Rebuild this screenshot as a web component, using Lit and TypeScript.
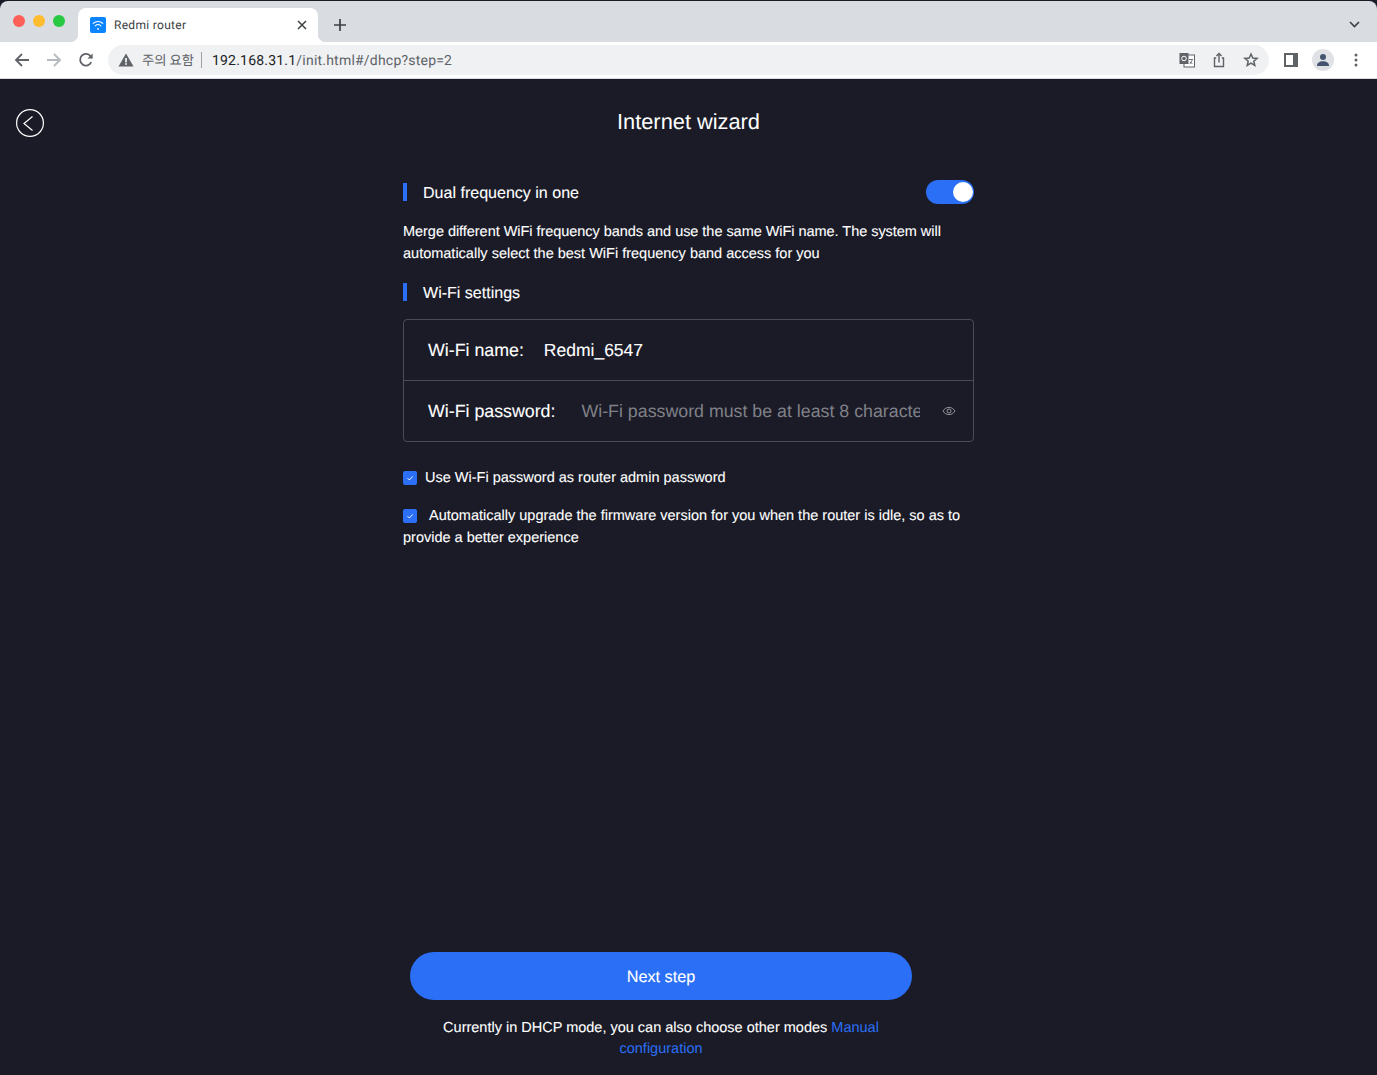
import { LitElement, html, css } from "lit";
import { customElement } from "lit/decorators.js";

@customElement("app-root")
export class AppRoot extends LitElement {
  static styles = css`
    :host { display: flex; flex-direction: column; width: 1377px; height: 1075px; overflow: hidden; font-family: "Liberation Sans", Arial, sans-serif; background: #1a1b27; text-rendering: geometricPrecision; }
    svg { display: block; }
    .tabstrip { height: 41px; margin-top: 1px; background: #d9dce1; display: flex; align-items: flex-end; position: relative; border-radius: 8px 8px 0 0; flex: none; }
    .lights { display: flex; gap: 8px; padding: 0 0 0 13px; align-self: flex-start; margin-top: 14px; width: 78px; box-sizing: border-box; flex: none; }
    .lights i { width: 12px; height: 12px; border-radius: 50%; display: block; }
    .tab { width: 240px; height: 34px; background: #fff; border-radius: 8px 8px 0 0; display: flex; align-items: center; box-sizing: border-box; padding: 0 11px 0 12px; font: 12px Roboto, sans-serif; color: #3c4043; position: relative; flex: none; }
    .tab::before, .tab::after { content: ""; position: absolute; bottom: 0; width: 8px; height: 8px; }
    .tab::before { left: -8px; background: radial-gradient(circle at 0 0, transparent 8px, #fff 8.5px); }
    .tab::after { right: -8px; background: radial-gradient(circle at 100% 0, transparent 8px, #fff 8.5px); }
    .fav { width: 16px; height: 16px; border-radius: 2px; background: #0a84ff; margin-right: 8px; flex: none; }
    .title { flex: 1; letter-spacing: 0.3px; }
    .plus { margin: 0 0 11px 16px; }
    .chev { position: absolute; right: 17px; top: 20px; }
    .toolbar { height: 36px; background: #fff; display: flex; align-items: center; flex: none; position: relative; }
    .nav { width: 32px; display: flex; justify-content: center; flex: none; }
    .navs { display: flex; padding-left: 6px; gap: 0; width: 108px; box-sizing: border-box; }
    .omni { width: 1161px; height: 30px; background: #eff1f3; border-radius: 15px; display: flex; align-items: center; box-sizing: border-box; padding-left: 10px; flex: none; font: 14px Roboto, sans-serif; }
    .warn-text { font: 13.3px "Noto Sans CJK KR", sans-serif; color: #5f6368; margin-left: 8px; position: relative; top: -1px; }
    .sep { width: 1px; height: 16px; background: #9aa0a6; margin: 0 10px 0 7px; }
    .url { padding-top: 1px; letter-spacing: 0.21px; }
    .host { color: #202124; }
    .path { color: #5f6368; }
    .spacer { flex: 1; }
    .omni-icons { display: flex; gap: 16px; padding-right: 10px; align-items: center; }
    .rhs { display: flex; align-items: center; margin-left: 15px; }
    .avatar { width: 22px; height: 22px; border-radius: 50%; background: #dfe1e5; margin-left: 14px; display: flex; align-items: center; justify-content: center; }
    .dots { margin-left: 20px; }
    .divider { height: 1px; background: #d9dce1; flex: none; }
    .page { flex: 1; position: relative; display: flex; flex-direction: column; color: #fff; min-height: 0; }
    .back { position: absolute; left: 16px; top: 30px; }
    h1 { margin: 0; padding-top: 29px; height: 57px; box-sizing: border-box; font-size: 21.8px; font-weight: 400; line-height: 28px; text-align: center; }
    .col { width: 571px; margin: 0 0 0 403px; font-size: 14.5px; line-height: 22px; display: flex; flex-direction: column; flex: 1; -webkit-text-stroke: 0.1px #fff; }
    .head { display: flex; align-items: center; justify-content: space-between; font-size: 16.05px; height: 24px; }
    .label { border-left: 4px solid #2a6ff6; height: 18px; line-height: 21px; padding-left: 16px; }
    .switch { width: 48px; height: 24px; border-radius: 12px; background: #2a6ff6; position: relative; }
    .knob { position: absolute; right: 1px; top: 2px; width: 20px; height: 20px; border-radius: 50%; background: #fff; }
    .desc { margin: 17px 0 15px; }
    .tight { letter-spacing: -0.04px; }
    .box { margin-top: 15px; border: 1px solid #4a4b55; border-radius: 4px; }
    .row { height: 60px; display: flex; align-items: center; padding: 0 17px 0 24px; font-size: 17.8px; }
    .row + .row { border-top: 1px solid #4a4b55; }
    .key { flex: none; }
    .val { margin-left: 20px; font-size: 17.5px; }
    .ph { margin-left: 26px; width: 339px; overflow: hidden; white-space: nowrap; color: #808187; -webkit-text-stroke: 0; }
    .eye { margin-left: auto; }
    .check { margin-top: 16px; }
    .box + .check { margin-top: 25px; }
    .cb { display: inline-block; width: 14px; height: 14px; border-radius: 2px; background: #2a6ff6; vertical-align: -3px; margin-right: 8px; }
    .cb svg { width: 14px; height: 14px; }
    .check.two .cb { margin-right: 12px; }
    .foot { width: 502px; margin: 0 0 15px 410px; text-align: center; font-size: 14.5px; line-height: 21px; flex: none; -webkit-text-stroke: 0.1px currentColor; }
    .btn { height: 48px; padding: 3px 0 0; border-radius: 24px; background: #2a6ff6; color: #fff; font-size: 16.2px; display: flex; align-items: center; justify-content: center; margin-bottom: 18px; border: 0; width: 100%; font-family: inherit; text-rendering: geometricPrecision; box-sizing: border-box; }
    a { color: #2a6ff6; text-decoration: none; -webkit-text-stroke: 0; }
  `;

  render() {
    const check = html`<span class="cb"><svg viewBox="0 0 14 14" fill="none" stroke="#fff" stroke-width=".9"><path d="M4.5 7.2l1.8 1.800 3.400-3.600"/></svg></span>`;
    return html`
      <div class="tabstrip">
        <div class="lights"><i style="background:#ff5f57"></i><i style="background:#febc2e"></i><i style="background:#28c840"></i></div>
        <div class="tab">
          <div class="fav"><svg width="16" height="16" viewBox="0 0 16 16" fill="none" stroke="#fff" stroke-width="1.100" stroke-linecap="round"><path d="M3.200 6.400a7 7 0 0 1 9.600 0"/><path d="M5.200 8.800a4.200 4.200 0 0 1 5.600 0"/><circle cx="8" cy="11.900" r=".9" fill="#fff" stroke="none"/></svg></div>
          <span class="title">Redmi router</span>
          <svg width="10" height="10" viewBox="0 0 10 10" stroke="#3c4043" stroke-width="1.500"><path d="M1 1l8 8M9 1l-8 8"/></svg>
        </div>
        <svg class="plus" width="12" height="12" viewBox="0 0 12 12" stroke="#3c4043" stroke-width="1.700"><path d="M6 0v12M0 6h12"/></svg>
        <svg class="chev" width="11" height="7" viewBox="0 0 11 7" fill="none" stroke="#3c4043" stroke-width="1.600"><path d="M1 1l4.500 4.500L10 1"/></svg>
      </div>
      <div class="toolbar">
        <div class="navs">
          <div class="nav"><svg width="16" height="16" viewBox="0 0 16 16" fill="none" stroke="#5f6368" stroke-width="1.800"><path d="M15 8H2M8 2L2 8l6 6"/></svg></div>
          <div class="nav"><svg width="16" height="16" viewBox="0 0 16 16" fill="none" stroke="#b5b8bd" stroke-width="1.800"><path d="M1 8h13M8 2l6 6-6 6"/></svg></div>
          <div class="nav"><svg width="16" height="16" viewBox="0 0 16 16" fill="none" stroke="#5f6368" stroke-width="1.800"><path d="M13.200 10.200A5.800 5.800 0 1 1 12.600 4.300L14 6"/><path d="M14.600 1.400v5.200H9.400" fill="#5f6368" stroke="none"/></svg></div>
        </div>
        <div class="omni">
          <svg width="16" height="14" viewBox="0 0 16 14"><path d="M8 0.500L15.500 13.500H.5z" fill="#5f6368"/><rect x="7.200" y="5" width="1.600" height="4.400" fill="#fff"/><rect x="7.200" y="10.200" width="1.600" height="1.600" fill="#fff"/></svg>
          <span class="warn-text">주의 요함</span>
          <span class="sep"></span>
          <span class="url"><span class="host">192.168.31.1</span><span class="path">/init.html#/dhcp?step=2</span></span>
          <span class="spacer"></span>
          <div class="omni-icons">
            <svg width="16" height="16" viewBox="0 0 16 16"><rect x="5" y="3" width="10.500" height="12" fill="#fff" stroke="#5f6368"/><rect x=".5" y="1" width="9" height="11" fill="#5f6368"/><circle cx="5" cy="6.500" r="2.300" fill="none" stroke="#fff" stroke-width="1"/><path d="M10 7.500h4M12 7v1M10.800 12l2.400-3.800M13.400 12l-2-2.200" stroke="#5f6368" stroke-width=".9" fill="none"/></svg>
            <svg width="16" height="16" viewBox="0 0 16 16" fill="none" stroke="#5f6368" stroke-width="1.400"><path d="M5.200 6H3.500v8.500h9V6h-1.700"/><path d="M8 10.500V1.500M5.400 4L8 1.500 10.600 4"/></svg>
            <svg width="16" height="16" viewBox="0 0 16 16" fill="none" stroke="#5f6368" stroke-width="1.500"><path d="M8 2l1.800 4 4.300.4-3.300 2.800 1 4.300L8 11.200l-3.800 2.300 1-4.300L1.900 6.400 6.200 6z"/></svg>
          </div>
        </div>
        <div class="rhs">
          <svg width="14" height="14" viewBox="0 0 14 14"><rect x="1" y="1" width="12" height="12" fill="#fff" stroke="#5f6368" stroke-width="2"/><rect x="9" y="1" width="4" height="12" fill="#5f6368"/></svg>
          <div class="avatar"><svg width="14" height="14" viewBox="0 0 14 14" fill="#44546f"><circle cx="7" cy="4" r="3"/><path d="M1 13c0-3.200 2.500-4.700 6-4.700s6 1.500 6 4.700z"/></svg></div>
          <svg class="dots" width="4" height="14" viewBox="0 0 4 14" fill="#5f6368"><circle cx="2" cy="2" r="1.500"/><circle cx="2" cy="7" r="1.500"/><circle cx="2" cy="12" r="1.500"/></svg>
        </div>
      </div>
      <div class="divider"></div>
      <div class="page">
        <svg class="back" width="28" height="28" viewBox="0 0 28 28" fill="none" stroke="#fff" stroke-width="1.200"><circle cx="14" cy="14" r="13.400"/><path d="M16.500 7.500L8 14.500l8.500 7"/></svg>
        <h1>Internet wizard</h1>
        <div class="col">
          <div class="head" style="margin-top:44px"><span class="label">Dual frequency in one</span><span class="switch"><span class="knob"></span></span></div>
          <p class="desc"><span class="tight">Merge different WiFi frequency bands and use the same WiFi name. The system will</span> automatically select the best WiFi frequency band access for you</p>
          <div class="head"><span class="label">Wi-Fi settings</span></div>
          <div class="box">
            <div class="row"><span class="key">Wi-Fi name:</span><span class="val">Redmi_6547</span></div>
            <div class="row"><span class="key">Wi-Fi password:</span><span class="ph">Wi-Fi password must be at least 8 characters</span>
              <svg class="eye" width="14" height="10" viewBox="0 0 14 10" fill="none" stroke="#a0a1a6" stroke-width=".9"><path d="M1 5c2.800-4.800 9.200-4.800 12 0-2.800 4.800-9.200 4.800-12 0z"/><circle cx="7" cy="5" r="2"/></svg>
            </div>
          </div>
          <div class="check">${check}Use Wi-Fi password as router admin password</div>
          <div class="check two">${check}Automatically upgrade the firmware version for you when the router is idle, so as to provide a better experience</div>
        </div>
        <div class="foot">
          <button class="btn">Next step</button>
          Currently in DHCP mode, you can also choose other modes <a>Manual configuration</a>
        </div>
      </div>
    `;
  }
}
